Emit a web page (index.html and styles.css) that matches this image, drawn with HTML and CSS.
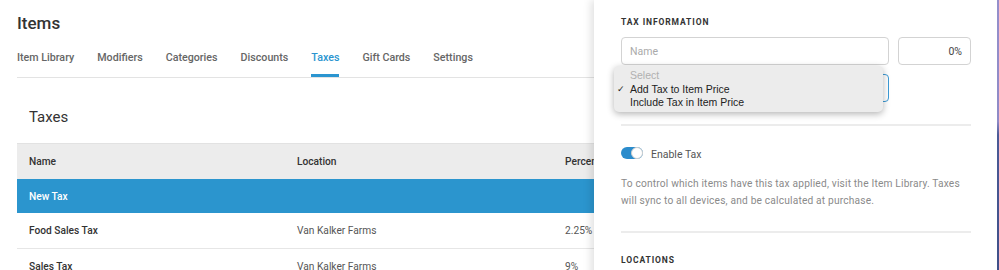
FILE: index.html
```html
<html>

<head>
  <title>Items - Taxes</title>
  <meta name="viewport" content="width=device-width, initial-scale=1">
  <link rel="stylesheet" href="styles.css">
</head>

<body>
  <div class="main">
    <h1 class="title">Items</h1>

    <!-- Tabs -->
    <div class="tabs">
      <span class="tab">Item Library</span>
      <span class="tab">Modifiers</span>
      <span class="tab">Categories</span>
      <span class="tab">Discounts</span>
      <span class="tab active">Taxes</span>
      <span class="tab">Gift Cards</span>
      <span class="tab">Settings</span>
    </div>

    <div class="content">
      <h2 class="section-title">Taxes</h2>
      <div class="tax-table">
        <div class="row head">
          <span class="cell">Name</span>
          <span class="cell">Location</span>
          <span class="cell">Percent</span>
        </div>
        <div class="row selected">
          <span class="cell name">New Tax</span>
          <span class="cell"></span>
          <span class="cell"></span>
        </div>
        <div class="row">
          <span class="cell name">Food Sales Tax</span>
          <span class="cell">Van Kalker Farms</span>
          <span class="cell">2.25%</span>
        </div>
        <div class="row">
          <span class="cell name">Sales Tax</span>
          <span class="cell">Van Kalker Farms</span>
          <span class="cell">9%</span>
        </div>
      </div>
    </div>
  </div>

  <!-- Edit tax sheet -->
  <div class="sheet">
    <div class="label">Tax Information</div>
    <div class="field-row">
      <div class="input name-input">Name</div>
      <div class="input percent-input">0%</div>
    </div>

    <div class="select-wrap">
      <div class="select"></div>
      <div class="popup">
        <div class="option muted">Select</div>
        <div class="option checked">Add Tax to Item Price</div>
        <div class="option">Include Tax in Item Price</div>
      </div>
    </div>

    <div class="divider"></div>

    <div class="toggle-row">
      <span class="toggle"><span class="knob"></span></span>
      <span class="toggle-label">Enable Tax</span>
    </div>

    <p class="help">To control which items have this tax applied, visit the Item Library. Taxes will sync to all devices, and be calculated at purchase.</p>

    <div class="divider"></div>

    <div class="label locations">Locations</div>
  </div>

  <div class="desktop-edge"></div>
</body>

</html>
```

FILE: styles.css
```css
body {
  font-family: Roboto, "Liberation Sans", Arial, sans-serif;
  margin: 0;
  color: #3a3a3a;
  background: #fff;
  width: 999px;
  height: 270px;
  overflow: hidden;
  position: relative;
}

.main {
  padding: 12px 0 0 17px;
}

.title {
  font-size: 17px;
  line-height: 22px;
  font-weight: 500;
  margin: 0;
  color: #333;
}

.tabs {
  display: flex;
  gap: 23px;
  margin-top: 16px;
  border-bottom: 1px solid #e3e3e3;
}

.tab {
  font-size: 10.7px;
  font-weight: 500;
  line-height: 16px;
  color: #666;
  padding-bottom: 8px;
  border-bottom: 3px solid transparent;
}

.tab.active {
  color: #2b95d0;
  border-bottom-color: #2b95d0;
}

.section-title {
  font-size: 15px;
  font-weight: 400;
  line-height: 20px;
  margin: 29px 0 16px 0;
  padding-left: 12px;
  color: #333;
}

.tax-table {
  width: 820px;
  font-size: 10.2px;
}

.row {
  display: flex;
  align-items: center;
  height: 35px;
  border-bottom: 1px solid #e6e6e6;
  color: #555;
}

.cell {
  width: 244px;
  padding: 0 12px;
}

.row.head {
  height: 35px;
  border-top: 1px solid #e2e2e2;
  border-bottom: none;
  background-color: #ececec;
  font-weight: 500;
  color: #333;
}

.row .name {
  font-weight: 500;
  color: #333;
}

.row.selected {
  height: 34px;
  border-bottom: none;
  background-color: #2b95ce;
}

.row.selected .name {
  color: #fff;
}

.sheet {
  position: absolute;
  top: 0;
  right: 2px;
  width: 350px;
  height: 270px;
  padding: 16px 26px 0 27px;
  background: #fff;
  box-shadow: -3px 0 8px rgba(0, 0, 0, 0.12);
}

.label {
  font-size: 8.5px;
  font-weight: 700;
  letter-spacing: 0.9px;
  text-transform: uppercase;
  line-height: 12px;
  color: #333;
}

.field-row {
  display: flex;
  gap: 9px;
  margin-top: 9px;
}

.input {
  height: 26px;
  border: 1px solid #d3d3d3;
  border-radius: 4px;
  font-size: 10.5px;
  line-height: 28px;
  padding: 0 8px;
  color: #444;
}

.name-input {
  width: 250px;
  color: #aaa;
}

.percent-input {
  width: 55px;
  text-align: right;
}

.select-wrap {
  position: relative;
  margin-top: 9px;
}

.select {
  width: 266px;
  height: 26px;
  border: 1px solid #3d9bd6;
  border-radius: 4px;
}

.popup {
  position: absolute;
  top: -8px;
  left: -7px;
  width: 269px;
  height: 40px;
  padding-top: 3px;
  padding-bottom: 3px;
  background: #ececec;
  border-radius: 5px;
  box-shadow: 0 2px 7px rgba(0, 0, 0, 0.3);
  font-family: "Liberation Sans", Arial, sans-serif;
  font-size: 10.5px;
}

.option {
  line-height: 13.5px;
  padding-left: 16px;
  color: #222;
  position: relative;
}

.option.muted {
  color: #b0b0b0;
}

.option.checked::before {
  content: "\2713";
  position: absolute;
  left: 3px;
  font-size: 9px;
}

.divider {
  height: 2px;
  background: #ececec;
  margin-top: 22px;
}

.toggle-row {
  display: flex;
  align-items: center;
  gap: 8px;
  margin-top: 21px;
  height: 12px;
}

.toggle {
  width: 22px;
  height: 12px;
  border-radius: 6px;
  background: #2b8ccc;
  position: relative;
}

.knob {
  position: absolute;
  right: 0;
  top: 0;
  width: 10px;
  height: 10px;
  border: 1px solid #d0d0d0;
  border-radius: 50%;
  background: #fff;
}

.toggle-label {
  font-size: 10.5px;
  color: #555;
  padding-top: 2px;
}

.help {
  font-size: 10.2px;
  letter-spacing: 0.18px;
  line-height: 17px;
  color: #8a8a8a;
  margin: 16px 0 0 0;
}

.locations {
  margin-top: 21px;
}

.desktop-edge {
  position: absolute;
  top: 0;
  right: 0;
  width: 2px;
  height: 270px;
  background: linear-gradient(#958fcb 0%, #8f8ac6 45%, #4b5a96 50%, #3f4f88 100%);
}
```
